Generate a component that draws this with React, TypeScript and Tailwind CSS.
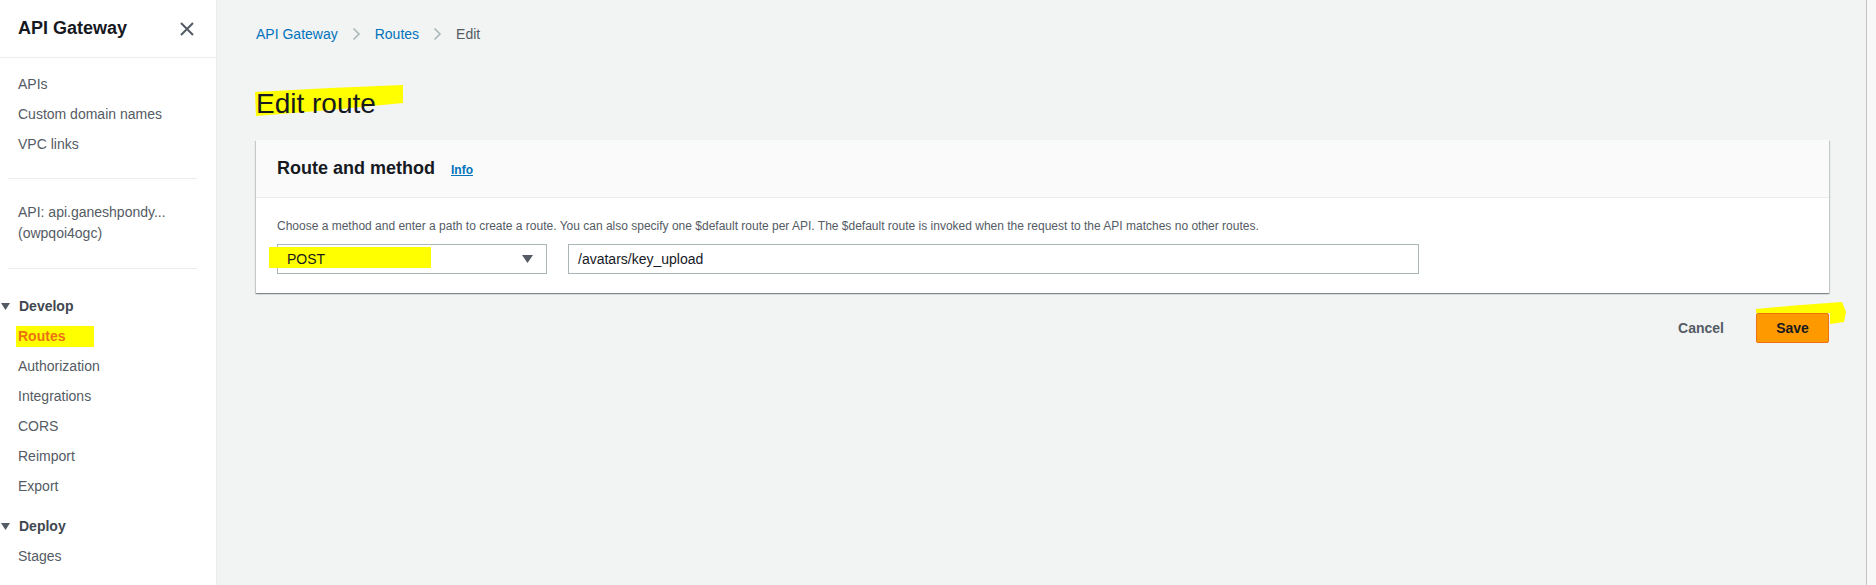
import React from "react";

const navTop = ["APIs", "Custom domain names", "VPC links"];
const developItems = ["Routes", "Authorization", "Integrations", "CORS", "Reimport", "Export"];

function Caret() {
  return (
    <svg width="9" height="7" viewBox="0 0 9 7" className="flex-none">
      <path d="M0 0 H9 L4.5 7 Z" fill="#545b64" />
    </svg>
  );
}

function Chevron() {
  return (
    <svg width="9" height="14" viewBox="0 0 9 14" className="flex-none">
      <path d="M1.5 1.5 L7 7 L1.5 12.5" fill="none" stroke="#aab7b8" strokeWidth="1.6" />
    </svg>
  );
}

function Sidebar() {
  return (
    <aside className="flex w-[217px] flex-none flex-col border-r border-[#eaeded] bg-white text-[14px] text-[#545b64]">
      <div className="flex h-[58px] flex-none items-center justify-between border-b border-[#eaeded] pl-[18px] pr-[22px]">
        <span className="text-[18px] font-bold text-[#16191f]">API Gateway</span>
        <svg width="14" height="14" viewBox="0 0 14 14">
          <path d="M1 1 L13 13 M13 1 L1 13" stroke="#545b64" strokeWidth="2" />
        </svg>
      </div>
      <ul className="pt-[11px]">
        {navTop.map((item) => (
          <li key={item} className="flex h-[30px] items-center pl-[18px]">
            {item}
          </li>
        ))}
      </ul>
      <div className="ml-[8px] mt-[19px] h-px w-[189px] bg-[#eaeded]" />
      <div className="mt-[23px] pl-[18px] leading-[21px]">
        <div>API: api.ganeshpondy...</div>
        <div>(owpqoi4ogc)</div>
      </div>
      <div className="ml-[8px] mt-[24px] h-px w-[189px] bg-[#eaeded]" />
      <div className="mt-[22px] flex h-[30px] items-center pl-[1px] font-bold text-[#414750]">
        <Caret />
        <span className="ml-[9px]">Develop</span>
      </div>
      <ul>
        {developItems.map((item) => (
          <li key={item} className="flex h-[30px] items-center pl-[18px]">
            {item === "Routes" ? (
              <span className="-ml-[2px] flex h-[21px] w-[78px] items-center bg-[#ffff00] pl-[2px] font-bold text-[#ec7211]">
                Routes
              </span>
            ) : (
              item
            )}
          </li>
        ))}
      </ul>
      <div className="mt-[10px] flex h-[30px] items-center pl-[1px] font-bold text-[#414750]">
        <Caret />
        <span className="ml-[9px]">Deploy</span>
      </div>
      <div className="flex h-[30px] items-center pl-[18px]">Stages</div>
    </aside>
  );
}

export default function App() {
  return (
    <div className="flex h-[585px] w-[1876px] overflow-hidden bg-white font-['Liberation_Sans',Arial,sans-serif]">
      <Sidebar />
      <main className="flex-1 bg-[#f2f3f3] pl-[39px] pr-[37px] pt-[24px]">
        <nav className="flex h-[20px] items-center gap-[14px] text-[14px]">
          <span className="text-[#0073bb]">API Gateway</span>
          <Chevron />
          <span className="text-[#0073bb]">Routes</span>
          <Chevron />
          <span className="text-[#545b64]">Edit</span>
        </nav>

        <div className="relative mt-[42px] h-[36px]">
          <svg width="150" height="32" viewBox="0 0 150 32" className="absolute -left-[1px] -top-[1px]">
            <polygon points="0,7 75,3 148,0 148,18 75,25 1,31" fill="#ffff00" />
          </svg>
          <h1 className="relative text-[28px] leading-[36px] text-[#16191f]">Edit route</h1>
        </div>

        <section className="mt-[18px] bg-white shadow-[0_1px_1px_0_rgba(0,28,36,0.3),1px_1px_1px_0_rgba(0,28,36,0.15),-1px_1px_1px_0_rgba(0,28,36,0.15)]">
          <div className="flex h-[58px] items-center border-b border-[#eaeded] bg-[#fafafa] px-[21px]">
            <h2 className="text-[18px] font-bold text-[#16191f]">Route and method</h2>
            <span className="ml-[16px] mt-[2px] text-[12px] font-bold text-[#0073bb] underline">Info</span>
          </div>
          <div className="px-[21px] pb-[19px] pt-[20px]">
            <p className="text-[12px] leading-[16px] text-[#545b64]">
              Choose a method and enter a path to create a route. You can also specify one $default route per API. The
              $default route is invoked when the request to the API matches no other routes.
            </p>
            <div className="mt-[10px] flex gap-[21px] text-[14px] text-[#16191f]">
              <div className="relative flex h-[30px] w-[270px] items-center justify-between border border-[#aab7b8] bg-white pl-[9px] pr-[13px]">
                <div className="absolute -left-[9px] top-[2px] h-[21px] w-[162px] bg-[#ffff00]" />
                <span className="relative">POST</span>
                <svg width="11" height="8" viewBox="0 0 11 8" className="relative">
                  <path d="M0 0 H11 L5.5 8 Z" fill="#545b64" />
                </svg>
              </div>
              <div className="flex h-[30px] w-[851px] items-center border border-[#aab7b8] bg-white pl-[9px]">
                /avatars/key_upload
              </div>
            </div>
          </div>
        </section>

        <div className="mt-[20px] flex items-center justify-end text-[14px] font-bold">
          <span className="mr-[32px] text-[#545b64]">Cancel</span>
          <div className="relative">
            <svg width="92" height="26" viewBox="0 0 92 26" className="absolute left-0 -top-[12px]">
              <polygon points="0,8 45,4 86,1 90,11 88,21 74,23 74,12 0,12" fill="#ffff00" />
            </svg>
            <button className="relative flex h-[30px] w-[73px] items-center justify-center rounded-[2px] border border-[#ec7211] bg-[#ff9900] text-[#16191f]">
              Save
            </button>
          </div>
        </div>
      </main>
      <div className="w-[10px] flex-none border-l border-[#c4c4c4] bg-[#f8f8f8]" />
    </div>
  );
}
